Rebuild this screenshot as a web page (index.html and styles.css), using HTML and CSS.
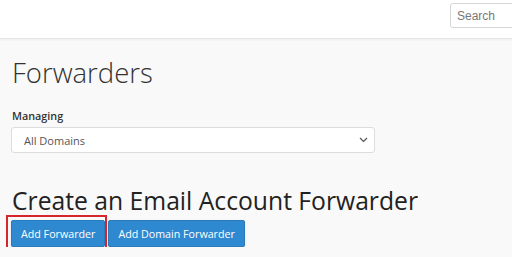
FILE: index.html
```html
<!DOCTYPE html>
<html>

<head>
  <meta name="viewport" content="width=device-width, initial-scale=1.0">
  <title>Forwarders</title>
  <link rel="stylesheet" href="styles.css">
</head>

<body>
  <div class="topbar">
    <input type="text" class="search" placeholder="Search">
  </div>

  <div class="content">
    <h1>Forwarders</h1>

    <label class="field-label" for="domain">Managing</label>
    <div class="select-wrap">
      <select id="domain" class="domain-select">
        <option>All Domains</option>
      </select>
      <svg class="chevron" width="9" height="6" viewBox="0 0 9 6">
        <path d="M1 1 L4.5 4.5 L8 1" fill="none" stroke="#555" stroke-width="1.2"/>
      </svg>
    </div>

    <h2>Create an Email Account Forwarder</h2>
    <div class="actions">
      <span class="highlight">
        <button class="btn">Add Forwarder</button>
      </span>
      <button class="btn">Add Domain Forwarder</button>
    </div>
  </div>
</body>

</html>
```

FILE: styles.css
```css
body {
  margin: 0;
  padding: 0;
  background-color: #f9f9f9;
  font-family: "Open Sans", sans-serif;
  color: #333;
  overflow: hidden;
}

.topbar {
  height: 38px;
  background-color: #ffffff;
  border-bottom: 1px solid #e6e6e6;
  box-shadow: 0 1px 2px rgba(0, 0, 0, 0.05);
  display: flex;
  justify-content: flex-end;
  align-items: flex-start;
  overflow: hidden;
}

.search {
  margin-top: 3px;
  margin-right: -20px;
  width: 82px;
  height: 25px;
  box-sizing: border-box;
  border: 1px solid #d6d6d6;
  border-radius: 3px;
  padding: 0 6px;
  font-family: "Liberation Sans", Arial, sans-serif;
  font-size: 12px;
  outline: none;
}

.search::placeholder {
  color: #777;
}

.content {
  padding: 0 11px;
}

h1 {
  font-weight: 300;
  font-size: 27.5px;
  line-height: 1.1;
  margin: 19px 0 0 1px;
  color: #333;
}

.field-label {
  display: block;
  margin: 19px 0 2px 1px;
  font-size: 10.8px;
  font-weight: 600;
  line-height: 18px;
}

.select-wrap {
  position: relative;
  width: 364px;
}

.domain-select {
  -webkit-appearance: none;
  appearance: none;
  width: 100%;
  height: 26px;
  box-sizing: border-box;
  border: 1px solid #ddd;
  border-radius: 3px;
  background-color: #ffffff;
  padding: 0 12px;
  font-family: "Open Sans", sans-serif;
  font-size: 11px;
  color: #555;
  outline: none;
}

.chevron {
  position: absolute;
  right: 7px;
  top: 10px;
}

h2 {
  font-weight: 400;
  font-size: 24.7px;
  line-height: 1.1;
  margin: 34px 0 6px 1px;
  color: #222;
}

.actions {
  display: flex;
  gap: 3px;
}

.highlight {
  position: relative;
  display: inline-block;
}

.highlight:after {
  content: "";
  position: absolute;
  left: -5px;
  right: -2px;
  top: -5px;
  bottom: -6px;
  border: 2px solid #d7262b;
}

.btn {
  height: 27px;
  padding: 0 9px;
  background-color: #2f89d0;
  border: 1px solid #2a7bbb;
  border-radius: 2px;
  color: #ffffff;
  font-family: "Open Sans", sans-serif;
  font-size: 10.7px;
  box-shadow: 0 1px 2px rgba(0, 0, 0, 0.15);
  cursor: pointer;
}
```
